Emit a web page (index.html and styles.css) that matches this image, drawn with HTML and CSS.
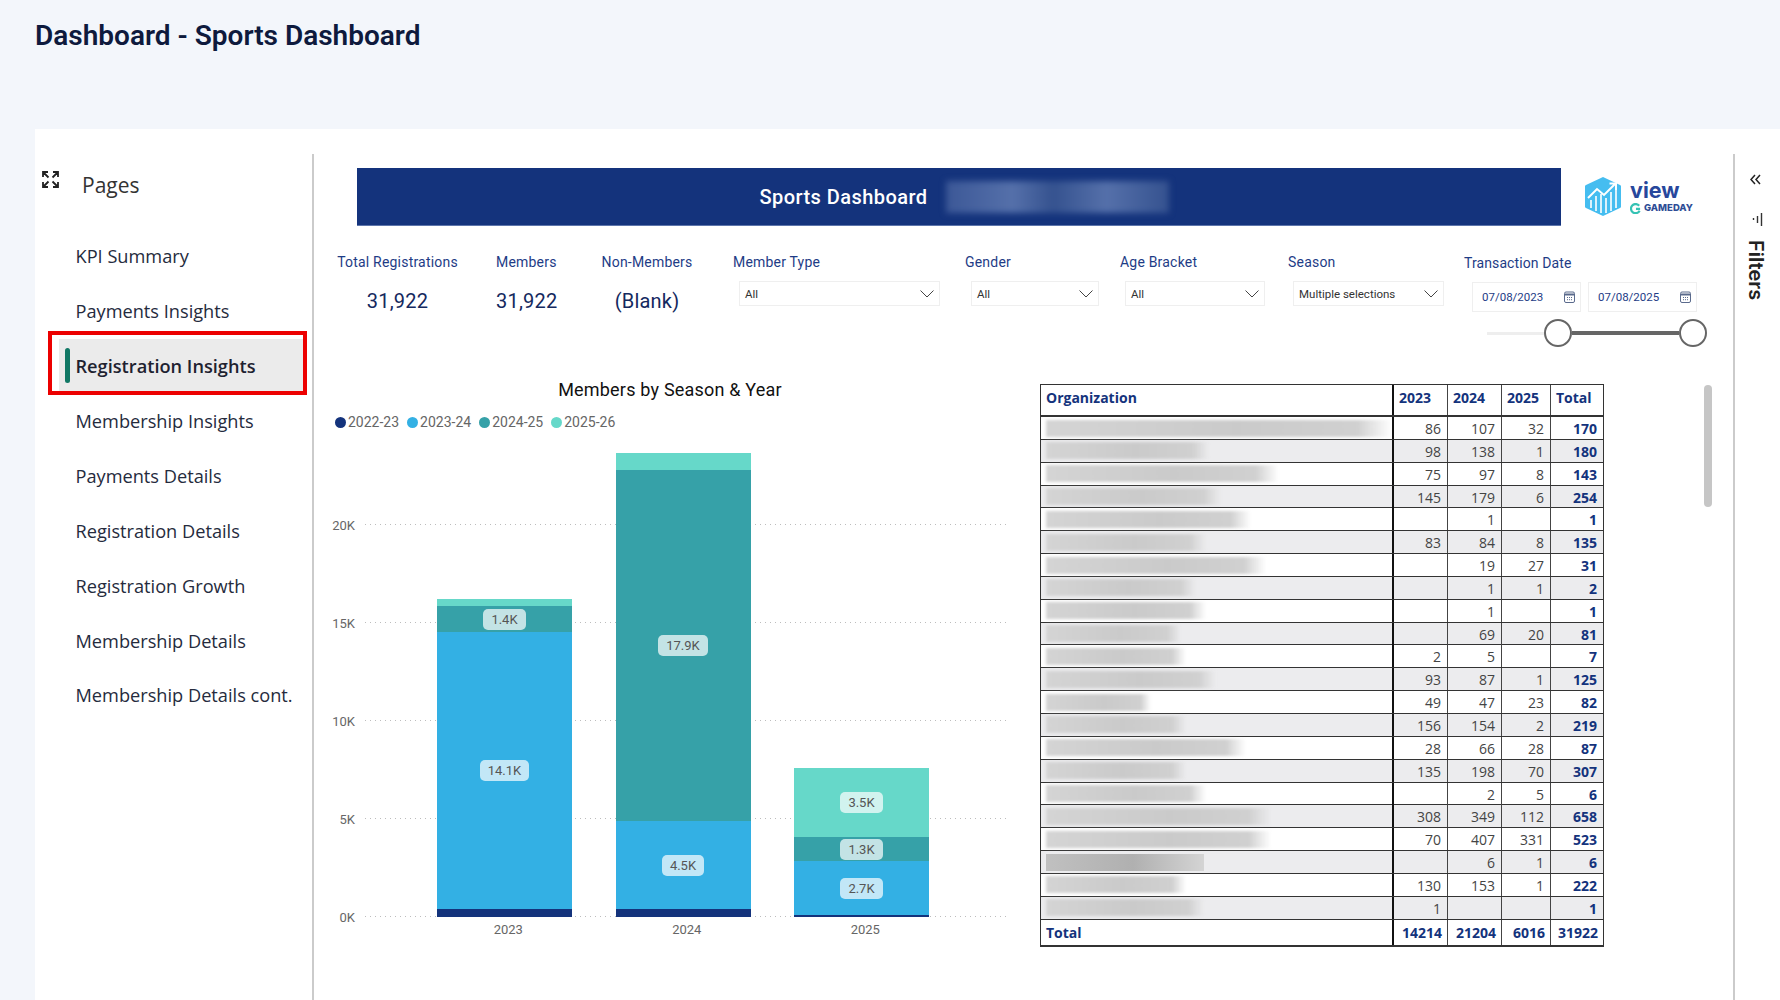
FILE: index.html
```html
<!DOCTYPE html>
<html lang="en">
<head>
<meta charset="utf-8">
<title>Dashboard - Sports Dashboard</title>
<link rel="stylesheet" href="styles.css">
</head>
<body>
<header class="top"><h1 class="page-title">Dashboard - Sports Dashboard</h1></header>
<div class="card">
  <aside class="sidebar">
    <div class="side-head">
      <svg class="expand" viewBox="0 0 17 17" width="17" height="17"><path d="M6.500 6.500 1.500 1.500M1 6V1H6M10.500 6.500l5-5M11 1h5V6M6.500 10.500l-5 5M1 11v5H6M10.500 10.500l5 5M16 11v5H11" fill="none" stroke="#222" stroke-width="1.800"/></svg>
      <span class="pages">Pages</span>
    </div>
    <nav class="nav">
      <a class="nav-item">KPI Summary</a>
      <a class="nav-item">Payments Insights</a>
      <a class="nav-item active">Registration Insights</a>
      <a class="nav-item">Membership Insights</a>
      <a class="nav-item">Payments Details</a>
      <a class="nav-item">Registration Details</a>
      <a class="nav-item">Registration Growth</a>
      <a class="nav-item">Membership Details</a>
      <a class="nav-item">Membership Details cont.</a>
    </nav>
  </aside>

  <main class="report">
    <div class="banner-row">
      <div class="banner">
        <span class="banner-title">Sports Dashboard</span>
        <span class="banner-blur"></span>
      </div>
      <div class="logo">
        <svg class="logo-hex" viewBox="0 0 36 39" width="36" height="39">
          <path d="M18 0 35 8a1.500 1.500 0 0 1 1 1.500V29.500a1.500 1.500 0 0 1-1 1.500L18 39 1 31a1.500 1.500 0 0 1-1-1.500V9.500A1.500 1.500 0 0 1 1 8Z" fill="#45bdf0"/>
          <path d="M6 23V31M11 19V34M16 17V36M21 21V36M26 15V34M31 11V31" stroke="#fff" stroke-width="1.600" fill="none"/>
          <path d="M3 21 12 12 19 18 30 7M24.500 6.500H31V13" stroke="#fff" stroke-width="2" fill="none"/>
        </svg>
        <div class="logo-text">
          <span class="logo-view">view</span>
          <span class="logo-brand">
            <svg viewBox="0 0 12 12" width="11" height="11"><path d="M10 3A5 5 0 1 0 10.500 8.500M6.500 6.500H11" fill="none" stroke="#35c2b4" stroke-width="2.400"/></svg>
            <span class="logo-gameday">GAMEDAY</span>
          </span>
        </div>
      </div>
    </div>

    <section class="controls">
      <div class="kpi kpi-total"><div class="label">Total Registrations</div><div class="value">31,922</div></div>
      <div class="kpi kpi-members"><div class="label">Members</div><div class="value">31,922</div></div>
      <div class="kpi kpi-non"><div class="label">Non-Members</div><div class="value">(Blank)</div></div>
      <div class="slicer"><div class="label">Member Type</div>
        <div class="select w-type"><span>All</span><svg class="chev" viewBox="0 0 14 8" width="14" height="8"><path d="M.5.500 7 7 13.500.500" fill="none" stroke="#444"/></svg></div></div>
      <div class="slicer"><div class="label">Gender</div>
        <div class="select w-gender"><span>All</span><svg class="chev" viewBox="0 0 14 8" width="14" height="8"><path d="M.5.500 7 7 13.500.500" fill="none" stroke="#444"/></svg></div></div>
      <div class="slicer"><div class="label">Age Bracket</div>
        <div class="select w-age"><span>All</span><svg class="chev" viewBox="0 0 14 8" width="14" height="8"><path d="M.5.500 7 7 13.500.500" fill="none" stroke="#444"/></svg></div></div>
      <div class="slicer"><div class="label">Season</div>
        <div class="select w-season"><span>Multiple selections</span><svg class="chev" viewBox="0 0 14 8" width="14" height="8"><path d="M.5.500 7 7 13.500.500" fill="none" stroke="#444"/></svg></div></div>
      <div class="slicer date-slicer"><div class="label">Transaction Date</div>
        <div class="dates">
          <div class="date"><span>07/08/2023</span><svg viewBox="0 0 11 12" width="11" height="12"><rect x=".5" y="1" width="10" height="10.500" rx="1.500" fill="#fff" stroke="#5a6a8c"/><path d="M1 3.500H10" stroke="#5a6a8c" stroke-width="2"/><path d="M3 6.500H4M5 6.500H6M7 6.500H8M3 8.700H4M5 8.700H6M7 8.700H8" stroke="#5a6a8c"/></svg></div>
          <div class="date"><span>07/08/2025</span><svg viewBox="0 0 11 12" width="11" height="12"><rect x=".5" y="1" width="10" height="10.500" rx="1.500" fill="#fff" stroke="#5a6a8c"/><path d="M1 3.500H10" stroke="#5a6a8c" stroke-width="2"/><path d="M3 6.500H4M5 6.500H6M7 6.500H8M3 8.700H4M5 8.700H6M7 8.700H8" stroke="#5a6a8c"/></svg></div>
        </div>
        <div class="range">
          <span class="range-off"></span><span class="knob"></span><span class="range-on"></span><span class="knob"></span>
        </div>
      </div>
    </section>

    <section class="content">
      <div class="chart">
        <div class="chart-title">Members by Season &amp; Year</div>
        <div class="legend">
          <span class="lg"><i class="dot c1"></i>2022-23</span>
          <span class="lg"><i class="dot c2"></i>2023-24</span>
          <span class="lg"><i class="dot c3"></i>2024-25</span>
          <span class="lg"><i class="dot c4"></i>2025-26</span>
        </div>
        <div class="plot">
          <div class="grid-row first"><span class="ytick">20K</span><span class="gline"></span></div>
          <div class="grid-row"><span class="ytick">15K</span><span class="gline"></span></div>
          <div class="grid-row"><span class="ytick">10K</span><span class="gline"></span></div>
          <div class="grid-row"><span class="ytick">5K</span><span class="gline"></span></div>
          <div class="grid-row"><span class="ytick">0K</span><span class="gline"></span></div>
          <div class="bars">
            <div class="bar">
              <div class="seg c4" style="height:7px"></div>
              <div class="seg c3" style="height:26px"><span class="dl">1.4K</span></div>
              <div class="seg c2" style="height:277px"><span class="dl">14.1K</span></div>
              <div class="seg c1" style="height:8px"></div>
            </div>
            <div class="bar">
              <div class="seg c4" style="height:17px"></div>
              <div class="seg c3" style="height:351px"><span class="dl">17.9K</span></div>
              <div class="seg c2" style="height:88px"><span class="dl">4.5K</span></div>
              <div class="seg c1" style="height:8px"></div>
            </div>
            <div class="bar">
              <div class="seg c4" style="height:69px"><span class="dl">3.5K</span></div>
              <div class="seg c3" style="height:24px"><span class="dl">1.3K</span></div>
              <div class="seg c2" style="height:54px"><span class="dl">2.7K</span></div>
              <div class="seg c1" style="height:2px"></div>
            </div>
          </div>
        </div>
        <div class="xaxis"><span>2023</span><span>2024</span><span>2025</span></div>
      </div>

      <div class="matrix">
        <div class="mrow mhead"><span>Organization</span><span>2023</span><span>2024</span><span>2025</span><span>Total</span></div>
        <div class="mrow"><span><i class="blur" style="width:346px"></i></span><span>86</span><span>107</span><span>32</span><span>170</span></div>
        <div class="mrow alt"><span><i class="blur" style="width:163px"></i></span><span>98</span><span>138</span><span>1</span><span>180</span></div>
        <div class="mrow"><span><i class="blur" style="width:233px"></i></span><span>75</span><span>97</span><span>8</span><span>143</span></div>
        <div class="mrow alt"><span><i class="blur" style="width:175px"></i></span><span>145</span><span>179</span><span>6</span><span>254</span></div>
        <div class="mrow"><span><i class="blur" style="width:205px"></i></span><span></span><span>1</span><span></span><span>1</span></div>
        <div class="mrow alt"><span><i class="blur" style="width:160px"></i></span><span>83</span><span>84</span><span>8</span><span>135</span></div>
        <div class="mrow"><span><i class="blur" style="width:220px"></i></span><span></span><span>19</span><span>27</span><span>31</span></div>
        <div class="mrow alt"><span><i class="blur" style="width:150px"></i></span><span></span><span>1</span><span>1</span><span>2</span></div>
        <div class="mrow"><span><i class="blur" style="width:160px"></i></span><span></span><span>1</span><span></span><span>1</span></div>
        <div class="mrow alt"><span><i class="blur" style="width:135px"></i></span><span></span><span>69</span><span>20</span><span>81</span></div>
        <div class="mrow"><span><i class="blur" style="width:140px"></i></span><span>2</span><span>5</span><span></span><span>7</span></div>
        <div class="mrow alt"><span><i class="blur" style="width:170px"></i></span><span>93</span><span>87</span><span>1</span><span>125</span></div>
        <div class="mrow"><span><i class="blur" style="width:105px"></i></span><span>49</span><span>47</span><span>23</span><span>82</span></div>
        <div class="mrow alt"><span><i class="blur" style="width:140px"></i></span><span>156</span><span>154</span><span>2</span><span>219</span></div>
        <div class="mrow"><span><i class="blur" style="width:200px"></i></span><span>28</span><span>66</span><span>28</span><span>87</span></div>
        <div class="mrow alt"><span><i class="blur" style="width:140px"></i></span><span>135</span><span>198</span><span>70</span><span>307</span></div>
        <div class="mrow"><span><i class="blur" style="width:160px"></i></span><span></span><span>2</span><span>5</span><span>6</span></div>
        <div class="mrow alt"><span><i class="blur" style="width:225px"></i></span><span>308</span><span>349</span><span>112</span><span>658</span></div>
        <div class="mrow"><span><i class="blur" style="width:225px"></i></span><span>70</span><span>407</span><span>331</span><span>523</span></div>
        <div class="mrow alt"><span><i class="blur dark" style="width:158px"></i></span><span></span><span>6</span><span>1</span><span>6</span></div>
        <div class="mrow"><span><i class="blur" style="width:140px"></i></span><span>130</span><span>153</span><span>1</span><span>222</span></div>
        <div class="mrow alt"><span><i class="blur" style="width:158px"></i></span><span>1</span><span></span><span></span><span>1</span></div>
        <div class="mrow mtotal"><span>Total</span><span>14214</span><span>21204</span><span>6016</span><span>31922</span></div>
      </div>

      <div class="scrollbar"></div>
    </section>
  </main>

  <aside class="filters">
    <svg class="collapse" viewBox="0 0 11 11" width="11" height="11"><path d="M5 1 1 5.500 5 10M10 1 6 5.500 10 10" fill="none" stroke="#222" stroke-width="1.500"/></svg>
    <svg class="filter-icon" viewBox="0 0 11 13" width="11" height="13"><path d="M1.500 5V7M5.500 3V10M9.500 0V13" stroke="#333" stroke-width="1.400" fill="none"/></svg>
    <span class="filters-label">Filters</span>
  </aside>
</div>
</body>
</html>
```
FILE: styles.css
```css
*, *::before, *::after { box-sizing: border-box; }
html, body { height: 100%; }
body {
  margin: 0;
  height: 1000px;
  overflow: hidden;
  background: #f3f6fb;
  font-family: "Roboto", "Liberation Sans", sans-serif;
  color: #222;
}
.top { height: 129px; padding: 18px 0 0 35px; }
.page-title {
  margin: 0;
  font: 600 28px/36px "Roboto", sans-serif;
  color: #0e1a3d;
}
.card {
  display: flex;
  margin-left: 35px;
  height: 871px;
  padding-top: 25px;
  background: #fff;
}
/* sidebar */
.sidebar {
  flex: 0 0 279px;
  border-right: 2px solid #cbcbcb;
  padding-top: 17px;
  font-family: "Open Sans", sans-serif;
}
.side-head { display: flex; padding-left: 7px; gap: 23px; height: 28px; }
.pages { font-size: 21px; line-height: 28px; color: #333; }
.nav { display: flex; flex-direction: column; margin-top: 30px; margin-left: 24px; }
.nav-item {
  position: relative;
  display: flex;
  align-items: center;
  height: 54.88px;
  width: 244px;
  padding-left: 16.500px;
  font-size: 18.200px;
  color: #252b3d;
}
.nav-item.active { background: #ebebeb; font-weight: 600; color: #1e2230; }
.nav-item.active::before {
  content: "";
  position: absolute;
  left: 6px;
  top: 9px;
  width: 5px;
  height: 35px;
  border-radius: 3px;
  background: #117865;
}
.nav-item.active::after {
  content: "";
  position: absolute;
  left: -11px;
  top: -8px;
  width: 259px;
  height: 64px;
  border: 4px solid #ec0000;
}
/* report */
.report { flex: 1; padding: 14px 0 0 43px; min-width: 0; }
.banner-row { display: flex; align-items: flex-start; }
.banner {
  flex: 0 0 1204px;
  height: 58px;
  display: flex;
  align-items: center;
  justify-content: center;
  gap: 18px;
  padding-left: 10px;
  background: #14337c;
  border-bottom: 1px solid #5d75ab;
}
.banner-title { font-size: 20px; font-weight: 500; color: #fff; letter-spacing: .45px; }
.banner-blur {
  width: 223px;
  height: 32px;
  background: linear-gradient(90deg, #3c5897, #5570aa 30%, #35528f 48%, #5570aa 72%, #35528f);
  filter: blur(3px);
}
.logo { display: flex; margin: 9px 0 0 24px; gap: 9px; }
.logo-text { display: flex; flex-direction: column; padding-top: 2px; }
.logo-view { font: 700 21.500px/22px "Inter", sans-serif; color: #27479c; letter-spacing: 0; }
.logo-brand { display: flex; align-items: center; gap: 3px; margin-top: 1px; }
.logo-gameday { font: 800 9.500px/12px "Inter", sans-serif; color: #2f4d96; letter-spacing: 0; }

.controls {
  display: grid;
  grid-template-columns: 159px 104px 133px 232px 155px 168px 176px 1fr;
  height: 126px;
  margin: 28px 0 0 -20px;
}
.label { font-size: 14px; line-height: 17px; color: #1e3c86; letter-spacing: .2px; white-space: nowrap; }
.kpi { text-align: center; }
.kpi-total { width: 121px; }
.kpi-members { width: 60px; }
.kpi-non { width: 94px; }
.value { margin-top: 18px; font-size: 20px; line-height: 24px; color: #14295e; letter-spacing: .2px; }
.select {
  display: flex;
  align-items: center;
  justify-content: space-between;
  height: 25px;
  margin: 10px 0 0 6px;
  padding: 1px 5px 0 5px;
  border: 1px solid #efefef;
  font-size: 11.500px;
  color: #333;
}
.w-type { width: 201px; }
.w-gender { width: 128px; }
.w-age { width: 140px; margin-left: 5px; }
.w-season { width: 151px; margin-left: 5px; }
.date-slicer .label { margin-top: 1px; letter-spacing: .1px; }
.dates { display: flex; gap: 7px; margin: 10px 0 0 8px; }
.date {
  display: flex;
  align-items: center;
  justify-content: space-between;
  width: 109px;
  height: 30px;
  padding: 0 5px 0 9px;
  border: 1px solid #efefef;
  font-size: 11.500px;
  color: #1e3c86;
}
.range { display: flex; align-items: center; width: 220px; height: 28px; margin: 7px 0 0 23px; }
.range-off { width: 58px; height: 3px; background: #eee; }
.range-on { width: 109px; height: 4px; background: #666; }
.knob { width: 28px; height: 28px; border: 2px solid #666; border-radius: 50%; background: #fff; flex: none; }

/* chart */
.content { display: flex; align-items: flex-start; margin-left: -37px; }
.chart { flex: 0 0 700px; margin-top: 0; }
.chart-title { text-align: center; font-size: 18px; line-height: 20px; color: #111; letter-spacing: .2px; }
.legend { display: flex; gap: 8px; margin: 14px 0 0 15px; height: 16px; }
.lg { display: flex; align-items: center; gap: 2px; font-size: 14px; line-height: 16px; color: #666; }
.dot { width: 11px; height: 11px; border-radius: 50%; }
.c1 { background: #14337c; }
.c2 { background: #33b0e4; }
.c3 { background: #36a1a8; }
.c4 { background: #66d8c9; }
.plot { position: relative; width: 687px; }
.grid-row { display: grid; grid-template-columns: 45px 1fr; height: 98px; }
.grid-row.first { height: 95px; }
.ytick {
  align-self: end;
  margin-bottom: -9px;
  padding-right: 10px;
  text-align: right;
  font-size: 13px;
  line-height: 16px;
  color: #666;
}
.gline {
  background-image: linear-gradient(90deg, #bdbdbd 1px, transparent 1px);
  background-size: 5px 1px;
  background-repeat: repeat-x;
  background-position: left bottom;
}
.bars { position: absolute; left: 117px; bottom: 0; display: flex; align-items: flex-end; gap: 43.500px; }
.bar { display: flex; flex-direction: column; width: 135px; }
.seg { display: flex; align-items: center; justify-content: center; }
.dl {
  flex: none;
  padding: 0 8px;
  height: 21px;
  border-radius: 5px;
  background: rgba(255, 255, 255, .7);
  font-size: 13px;
  line-height: 21px;
  color: #555;
}
.xaxis { display: flex; margin: 5px 0 0 99px; }
.xaxis span { width: 178.500px; text-align: center; font-size: 13px; line-height: 16px; color: #666; }

/* matrix */
.matrix {
  flex: 0 0 564px;
  margin: 4px 0 0 20px;
  border: 1px solid #333;
  border-width: 1px 1px 2px 1px;
  font-family: "Open Sans", sans-serif;
  font-size: 14px;
  color: #444;
}
.mrow {
  display: grid;
  grid-template-columns: 351px 55px 54px 49px 1fr;
  height: 22.850px;
  border-bottom: 1px solid #333;
  background: #fff;
}
.mrow.alt { background: #ececee; }
.mrow span {
  display: flex;
  align-items: center;
  justify-content: flex-end;
  padding: 2px 6px 0 0;
  border-left: 1px solid #444;
  line-height: 20px;
  white-space: nowrap;
  min-width: 0;
}
.mrow span:first-child { justify-content: flex-start; padding: 0 0 0 5px; border-left: 0; }
.mrow span:nth-child(2) { border-left: 2px solid #111; }
.mrow span:last-child { color: #14337c; font-weight: 700; }
.mhead, .mtotal { font-weight: 700; color: #14337c; }
.mhead { height: 32px; border-bottom: 2px solid #333; }
.mhead span, .mhead span:first-child { justify-content: flex-start; padding: 0 0 5px 5px; }
.mtotal { height: 25px; border-bottom: 0; }
.mtotal span { padding: 2px 5px 0 0; }
.mtotal span:first-child { padding: 2px 0 0 5px; }
.blur {
  display: block;
  height: 17px;
  background: linear-gradient(90deg, #d4d4d4, #cacaca 55%, #d0d0d0 90%, transparent);
  filter: blur(1.500px);
}
.blur.dark { background: linear-gradient(90deg, #c0c0c0, #b0b0b0 55%, #d4d4d4); filter: none; }
.scrollbar {
  flex: none;
  width: 8px;
  height: 122px;
  margin: 5px 0 0 100px;
  border-radius: 4px;
  background: #c6c6c6;
}
/* filters */
.filters {
  flex: 0 0 47px;
  display: flex;
  flex-direction: column;
  border-left: 2px solid #cbcbcb;
  padding: 20px 0 0 15px;
}
.filter-icon { margin: 28px 0 0 2px; }
.filters-label {
  align-self: flex-start;
  margin: 14px 0 0 -6px;
  writing-mode: vertical-rl;
  font: 600 20px/24px "Inter", sans-serif;
  color: #222;
}
```
